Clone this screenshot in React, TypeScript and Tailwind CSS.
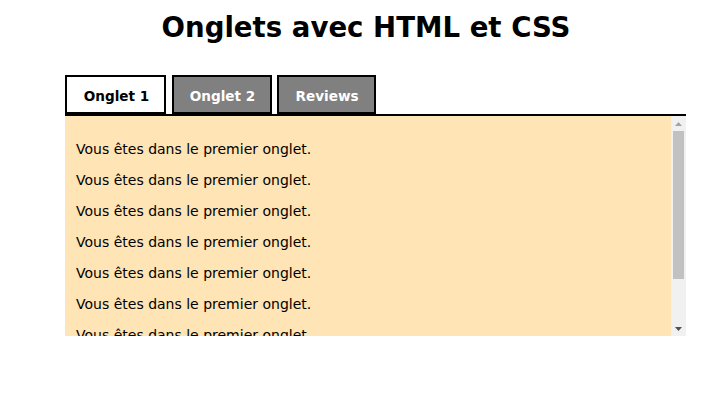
import React from "react";

export default function App() {
  const lines = Array.from({ length: 8 });
  return (
    <div className="w-[721px] h-[406px] bg-white text-black" style={{ fontFamily: '"DejaVu Sans", Verdana, sans-serif' }}>
      <h1 className="pt-[11px] pl-[11px] text-center text-[27.6px] leading-[33px] font-bold">
        Onglets avec HTML et CSS
      </h1>
      <div className="ml-[65px] w-[621px] mt-[31px]">
        <div className="flex items-end">
          <div className="w-[101px] h-[39px] pt-[3px] pl-[2px] border-2 border-black bg-white text-black text-[13.6px] font-bold flex items-center justify-center">
            Onglet 1
          </div>
          <div className="ml-[6px] w-[100px] h-[39px] pt-[3px] pl-[1px] border-2 border-black bg-[#808080] text-white text-[13.6px] font-bold flex items-center justify-center">
            Onglet 2
          </div>
          <div className="ml-[5px] w-[99px] h-[39px] pt-[3px] pl-[1px] border-2 border-black bg-[#808080] text-white text-[13.6px] font-bold flex items-center justify-center">
            Reviews
          </div>
        </div>
        <div className="border-t-2 border-black">
          <div className="h-[220px] flex bg-[#ffe4b5]">
            <div className="flex-1 overflow-hidden pl-[11px] pr-[10px] pt-[11px] text-[14px] leading-[17px] text-black">
              {lines.map((_, i) => (
                <p key={i} className="my-[14px] whitespace-nowrap">
                  Vous êtes dans le premier onglet.
                </p>
              ))}
            </div>
            <div className="w-[15px] h-full bg-[#f1f1f1] flex flex-col">
              <div className="h-[15px] flex items-center justify-center">
                <svg width="7" height="4" viewBox="0 0 7 4">
                  <polygon points="3.5,0 7,4 0,4" fill="#a3a3a3" />
                </svg>
              </div>
              <div className="h-[148px] mx-[2px] bg-[#c1c1c1]" />
              <div className="flex-1" />
              <div className="h-[15px] flex items-center justify-center">
                <svg width="7" height="4" viewBox="0 0 7 4">
                  <polygon points="0,0 7,0 3.5,4" fill="#505050" />
                </svg>
              </div>
            </div>
          </div>
        </div>
      </div>
    </div>
  );
}
